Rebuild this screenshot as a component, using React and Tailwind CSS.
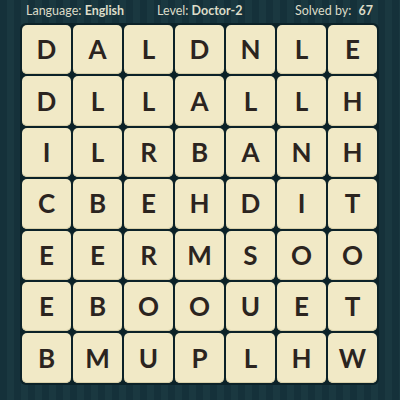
const rows = [
    'DALDNLE',
    'DLLALLH',
    'ILRBANH',
    'CBEHDIT',
    'EERMSOO',
    'EBOOUET',
    'BMUPLHW',
];

const App = () => {
    return (
        <div className="w-[400px] h-[400px] overflow-hidden bg-[repeating-linear-gradient(90deg,#15313a_0px,#15313a_7px,#1a3840_7px,#1a3840_14px)] font-['Lato',sans-serif]">
            {/* Header */}
            <div className="h-[24px] pb-px flex items-center text-[12.5px] text-[#dcdcc8] pl-[26px] pr-[27px]">
                <div className="w-[131px]">
                    Language: <span className="font-bold">English</span>
                </div>
                <div>
                    Level: <span className="font-bold">Doctor-2</span>
                </div>
                <div className="ml-auto">
                    Solved by: <span className="font-bold ml-1">67</span>
                </div>
            </div>

            {/* Board */}
            <div className="ml-[20px] w-[359px] -mt-px bg-[#0c2228] rounded-md p-[2px] flex flex-col gap-[2px]">
                {rows.map((row, r) => (
                    <div key={r} className="flex gap-[2px]">
                        {row.split('').map((ch, c) => (
                            <div
                                key={c}
                                className="w-[49px] h-[49.4px] rounded-[5px] bg-[#f1e9c6] flex items-center justify-center text-[26px] font-bold text-[#2b241f] shadow-[inset_0_-1px_0_#d8cfa8]"
                            >
                                {ch}
                            </div>
                        ))}
                    </div>
                ))}
            </div>
        </div>
    );
};

export default App;
